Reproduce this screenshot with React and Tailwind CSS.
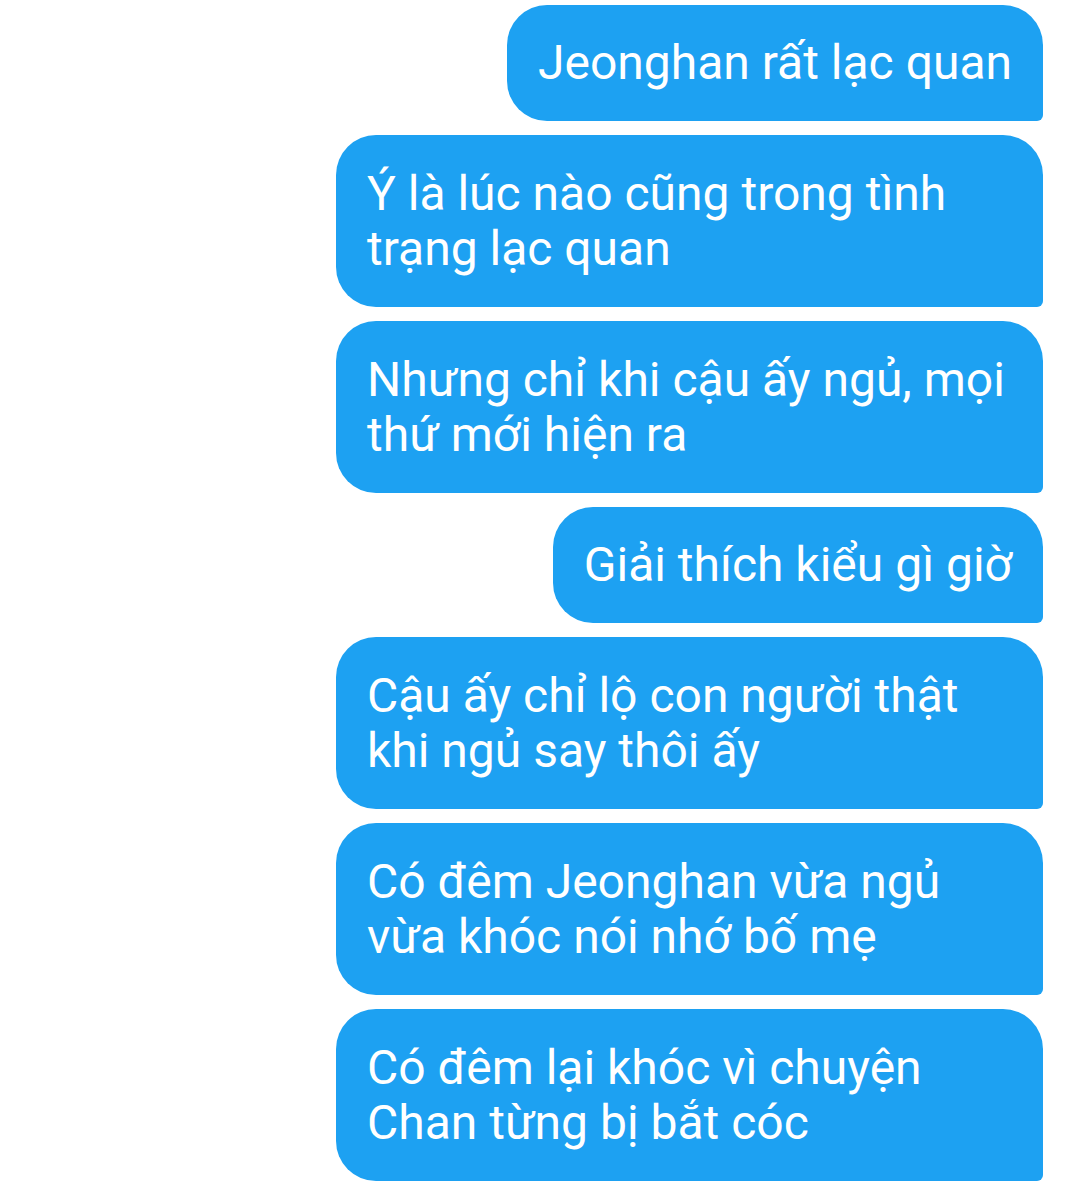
import React from "react";

const messages = [
    { lines: ["Jeonghan rất lạc quan"] },
    { lines: ["Ý là lúc nào cũng trong tình", "trạng lạc quan"] },
    { lines: ["Nhưng chỉ khi cậu ấy ngủ, mọi", "thứ mới hiện ra"] },
    { lines: ["Giải thích kiểu gì giờ"] },
    { lines: ["Cậu ấy chỉ lộ con người thật", "khi ngủ say thôi ấy"] },
    { lines: ["Có đêm Jeonghan vừa ngủ", "vừa khóc nói nhớ bố mẹ"] },
    { lines: ["Có đêm lại khóc vì chuyện", "Chan từng bị bắt cóc"] },
];

function Bubble({ lines }) {
    const multi = lines.length > 1;
    return (
        <div
            className={`bg-[#1da1f2] text-white rounded-[40px] rounded-br-[6px] px-[31px] text-[48px] leading-[55px] ${
                multi ? "w-[707px] py-[31px]" : "pt-[30px] pb-[31px]"
            }`}
        >
            {lines.map((line, i) => (
                <div key={i} className="whitespace-nowrap">
                    {line}
                </div>
            ))}
        </div>
    );
}

export default function App() {
    return (
        <div
            className="w-[1080px] h-[1183px] bg-white overflow-hidden flex flex-col items-end gap-[14px] pt-[5px] pr-[37px]"
            style={{ fontFamily: "Roboto, 'Noto Sans', sans-serif" }}
        >
            {messages.map((m, i) => (
                <Bubble key={i} lines={m.lines} />
            ))}
        </div>
    );
}
